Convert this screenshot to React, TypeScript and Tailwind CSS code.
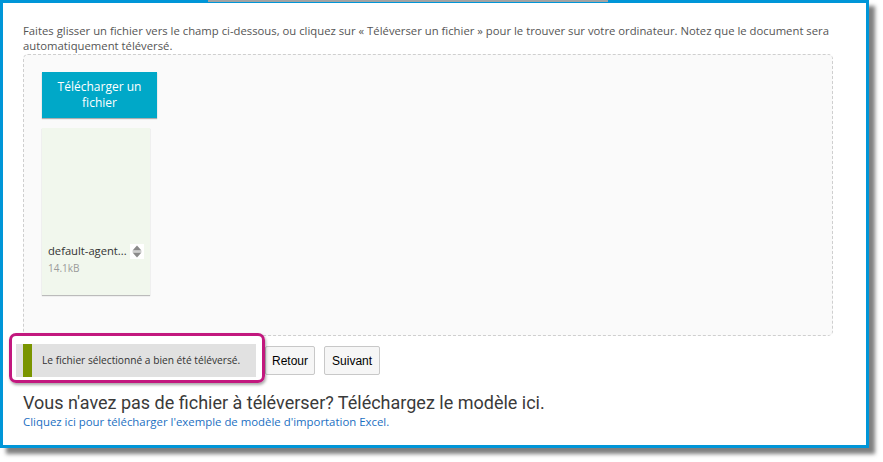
import React from "react";

const SortIcon: React.FC = () => (
  <span className="flex h-[15px] w-[14px] shrink-0 items-center justify-center bg-white">
    <svg width="10" height="13" viewBox="0 0 10 13">
      <path d="M5 0.5 L9.5 5.5 H0.5 Z" fill="#8a8a8a" />
      <path d="M5 12.5 L9.5 7.5 H0.5 Z" fill="#8a8a8a" />
      <rect x="0.5" y="6" width="9" height="1" fill="#cfcfcf" />
    </svg>
  </span>
);

const FileCard: React.FC<{ name: string; size: string }> = ({ name, size }) => (
  <div className="flex h-[167px] w-[108px] flex-col justify-end bg-[#f1f7ed] pl-[6px] pb-[21px] shadow-[0_1px_1px_rgba(0,0,0,0.25)]">
    <div className="flex items-center gap-[3px]">
      <span className="whitespace-nowrap text-[11.2px] leading-[16px] text-[#333]">{name}</span>
      <SortIcon />
    </div>
    <span className="mt-[3px] text-[10px] leading-[12px] text-[#9a9a9a]">{size}</span>
  </div>
);

export default function App() {
  return (
    <div className="relative h-[462px] w-[883px] overflow-hidden bg-white font-['Open_Sans',sans-serif]">
      <div className="h-[448px] w-[869px] border-[3px] border-[#0096d8] bg-white shadow-[6px_6px_4px_rgba(0,0,0,0.5)]">
        <div className="pl-[20px] pr-[33px] pt-[20px]">
          <p className="whitespace-nowrap text-[11.3px] leading-[15px] text-[#555]">
            Faites glisser un fichier vers le champ ci-dessous, ou cliquez sur « Téléverser un fichier » pour le trouver sur votre ordinateur. Notez que le document sera
            <br />
            automatiquement téléversé.
          </p>

          <div className="mt-[1px] flex h-[282px] flex-col gap-[10px] rounded-[5px] border border-dashed border-[#cfcfcf] bg-[#fafafa] pl-[18px] pt-[17px]">
            <button className="h-[46px] w-[115px] bg-[#00a8c8] px-2 text-[12px] font-medium leading-[16px] text-white shadow-[0_1px_1px_rgba(0,0,0,0.3)]">
              Télécharger un fichier
            </button>
            <FileCard name="default-agent..." size="14.1kB" />
          </div>

          <div className="relative mt-[8px] flex items-center gap-[9px]">
            <div className="ml-[-7px] flex h-[33px] w-[240px] items-center bg-[#e1e1e1] pl-[7px]">
              <span className="h-full w-[9px] bg-[#7a9500]" />
              <span className="ml-[10px] whitespace-nowrap text-[10.2px] text-[#333]">
                Le fichier sélectionné a bien été téléversé.
              </span>
            </div>
            <button className="h-[29px] rounded-[2px] border border-[#c8c8c8] bg-[#f6f6f6] px-[6px] font-['Liberation_Sans',sans-serif] text-[12px] text-black">
              Retour
            </button>
            <button className="h-[29px] rounded-[2px] border border-[#c8c8c8] bg-[#f6f6f6] px-[7px] font-['Liberation_Sans',sans-serif] text-[12px] text-black">
              Suivant
            </button>
            <div className="absolute left-[-14px] top-[-11px] h-[50px] w-[256px] rounded-[7px] border-[3px] border-[#c2187e] shadow-[1px_2px_3px_rgba(0,0,0,0.35)]" />
          </div>

          <h2 className="mt-[15px] font-['Roboto',sans-serif] text-[18px] font-normal leading-[22px] text-[#3a3a3a]">
            Vous n'avez pas de fichier à téléverser? Téléchargez le modèle ici.
          </h2>
          <a className="block text-[11.4px] leading-[15px] text-[#1b6fc2]">
            Cliquez ici pour télécharger l'exemple de modèle d'importation Excel.
          </a>
        </div>
      </div>
      <div className="absolute left-[208px] top-0 h-[2px] w-[400px] bg-[#a3a3a3]" />
    </div>
  );
}
